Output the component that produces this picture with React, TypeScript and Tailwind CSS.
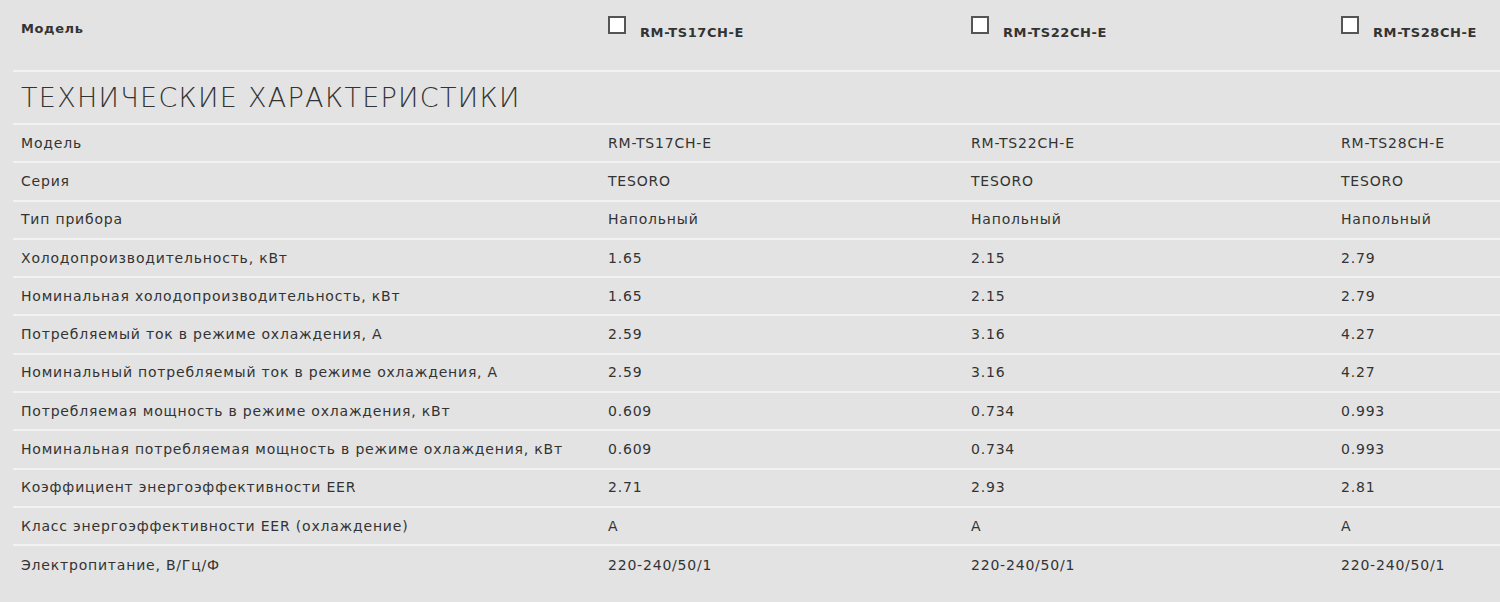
import React from "react";

const models = ["RM-TS17CH-E", "RM-TS22CH-E", "RM-TS28CH-E"];

const rows: [string, string, string, string][] = [
  ["Модель", "RM-TS17CH-E", "RM-TS22CH-E", "RM-TS28CH-E"],
  ["Серия", "TESORO", "TESORO", "TESORO"],
  ["Тип прибора", "Напольный", "Напольный", "Напольный"],
  ["Холодопроизводительность, кВт", "1.65", "2.15", "2.79"],
  ["Номинальная холодопроизводительность, кВт", "1.65", "2.15", "2.79"],
  ["Потребляемый ток в режиме охлаждения, А", "2.59", "3.16", "4.27"],
  ["Номинальный потребляемый ток в режиме охлаждения, А", "2.59", "3.16", "4.27"],
  ["Потребляемая мощность в режиме охлаждения, кВт", "0.609", "0.734", "0.993"],
  ["Номинальная потребляемая мощность в режиме охлаждения, кВт", "0.609", "0.734", "0.993"],
  ["Коэффициент энергоэффективности EER", "2.71", "2.93", "2.81"],
  ["Класс энергоэффективности EER (охлаждение)", "A", "A", "A"],
  ["Электропитание, В/Гц/Ф", "220-240/50/1", "220-240/50/1", "220-240/50/1"],
];

export default function App() {
  return (
    <div
      className="w-[1500px] h-[602px] overflow-hidden bg-[#e3e3e3] text-[#333333]"
      style={{ fontFamily: '"DejaVu Sans", "Open Sans", sans-serif' }}
    >
      <div className="ml-[13px]">
        {/* header row */}
        <div className="grid grid-cols-[587px_363px_370px_1fr] h-[72px] border-b-2 border-[#f2f2f2]">
          <div className="pl-2 pt-[19px] text-[13px] font-bold tracking-[0.6px]">Модель</div>
          {models.map((m) => (
            <div key={m} className="pl-2 pt-4 flex items-start gap-[14px]">
              <span className="block w-[18px] h-[18px] border-2 border-[#555555] bg-white shrink-0" />
              <span className="text-[13px] font-bold mt-[7px] tracking-[0.6px]">{m}</span>
            </div>
          ))}
        </div>
        {/* title */}
        <div className="h-[53px] border-b-2 border-[#f2f2f2] pl-2 flex items-center">
          <h2 className="text-[27px] font-extralight leading-none uppercase tracking-[1.3px]">
            Технические характеристики
          </h2>
        </div>
        {rows.map((r, i) => (
          <div
            key={i}
            className={`grid grid-cols-[587px_363px_370px_1fr] h-[38.3px] items-center text-[14px] tracking-[0.8px] ${
              i < rows.length - 1 ? "border-b-2 border-[#f2f2f2]" : ""
            }`}
          >
            <div className="pl-2 whitespace-nowrap">{r[0]}</div>
            <div className="pl-2">{r[1]}</div>
            <div className="pl-2">{r[2]}</div>
            <div className="pl-2">{r[3]}</div>
          </div>
        ))}
      </div>
    </div>
  );
}
